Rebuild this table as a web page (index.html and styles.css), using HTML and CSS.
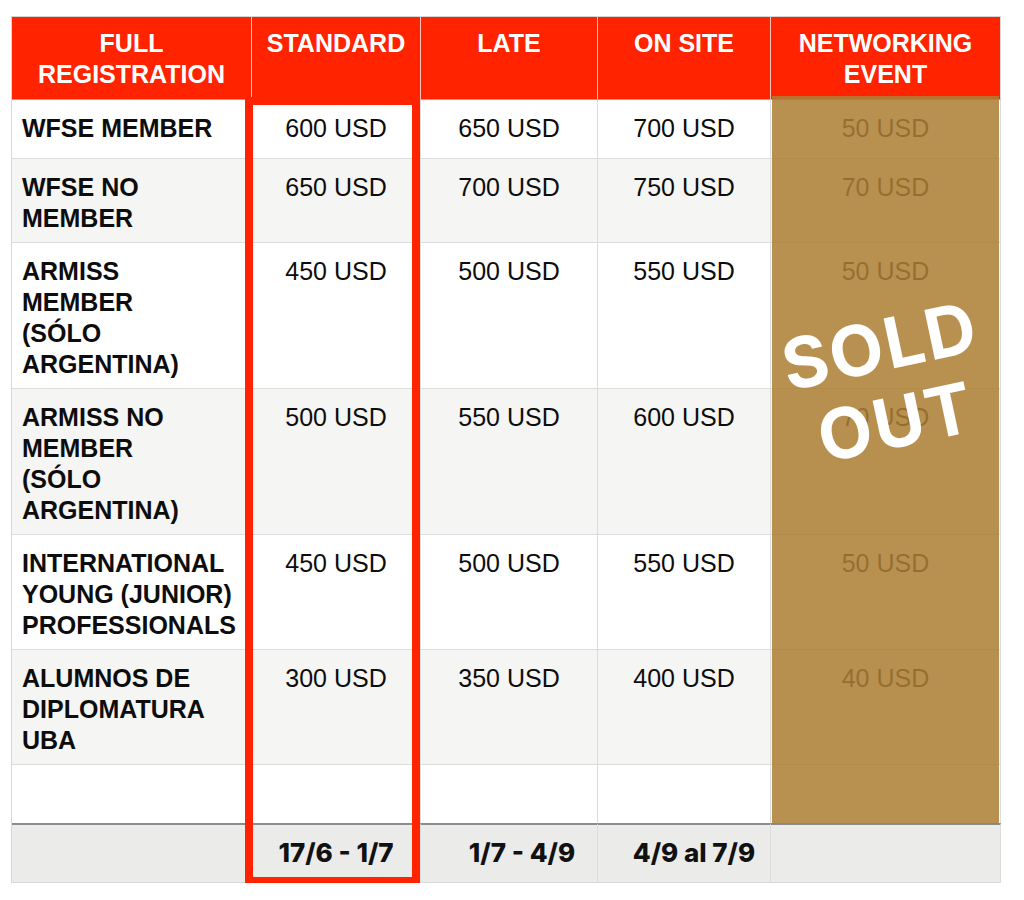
FILE: index.html
```html
<!DOCTYPE html>
<html lang="es">
<head>
<meta charset="utf-8">
<title>Registration fees</title>
<link rel="stylesheet" href="styles.css">
</head>
<body>
<div class="wrap">
  <table class="fees">
    <colgroup>
      <col class="c1"><col class="c2"><col class="c3"><col class="c4"><col class="c5">
    </colgroup>
    <thead>
      <tr>
        <th>FULL<br>REGISTRATION</th>
        <th>STANDARD</th>
        <th>LATE</th>
        <th>ON SITE</th>
        <th>NETWORKING<br>EVENT</th>
      </tr>
    </thead>
    <tbody>
      <tr class="short">
        <td class="cat">WFSE MEMBER</td><td>600 USD</td><td>650 USD</td><td>700 USD</td><td>50 USD</td>
      </tr>
      <tr class="alt">
        <td class="cat">WFSE NO<br>MEMBER</td><td>650 USD</td><td>700 USD</td><td>750 USD</td><td>70 USD</td>
      </tr>
      <tr>
        <td class="cat">ARMISS<br>MEMBER<br>(SÓLO<br>ARGENTINA)</td><td>450 USD</td><td>500 USD</td><td>550 USD</td><td>50 USD</td>
      </tr>
      <tr class="alt">
        <td class="cat">ARMISS NO<br>MEMBER<br>(SÓLO<br>ARGENTINA)</td><td>500 USD</td><td>550 USD</td><td>600 USD</td><td>70 USD</td>
      </tr>
      <tr>
        <td class="cat">INTERNATIONAL<br>YOUNG (JUNIOR)<br>PROFESSIONALS</td><td>450 USD</td><td>500 USD</td><td>550 USD</td><td>50 USD</td>
      </tr>
      <tr class="alt">
        <td class="cat">ALUMNOS DE<br>DIPLOMATURA<br>UBA</td><td>300 USD</td><td>350 USD</td><td>400 USD</td><td>40 USD</td>
      </tr>
      <tr class="empty">
        <td></td><td></td><td></td><td></td><td></td>
      </tr>
    </tbody>
    <tfoot>
      <tr>
        <td></td>
        <td class="d2">17/6 - 1/7</td>
        <td class="d3">1/7 - 4/9</td>
        <td class="d4">4/9 al 7/9</td>
        <td></td>
      </tr>
    </tfoot>
  </table>
  <div class="soldout">
    <div class="stamp">SOLD<br>OUT</div>
  </div>
  <div class="highlight"></div>
</div>
</body>
</html>
```
FILE: styles.css
```css
html, body {
  margin: 0;
  padding: 0;
  background: #ffffff;
}

.wrap {
  position: relative;
  width: 989px;
  margin: 16px 0 0 11px;
}

.fees {
  table-layout: fixed;
  width: 989px;
  border-collapse: separate;
  border-spacing: 0;
  border-top: 1px solid #d4d4d4;
  border-left: 1px solid #d8d8d8;
  font-family: "Liberation Sans", Arial, Helvetica, sans-serif;
  font-size: 25px;
  line-height: 31px;
  color: #0d0d0d;
}

.c1 { width: 240px; }
.c2 { width: 169px; }
.c3 { width: 177px; }
.c4 { width: 173px; }
.c5 { width: 230px; }

.fees th {
  background: #ff2300;
  color: #ffffff;
  font-weight: 700;
  text-align: center;
  vertical-align: top;
  padding: 11px 4px 9px;
  border-right: 1px solid rgba(255, 255, 255, 0.75);
  border-bottom: 1px solid #a9a9a9;
}

.fees th:last-child {
  border-right: 1px solid #d8d8d8;
}

.fees td {
  text-align: center;
  vertical-align: top;
  padding: 13px 4px 8px;
  border-right: 1px solid #dcdcdc;
  border-bottom: 1px solid #dcdcdc;
  background: #ffffff;
}

.fees tbody tr.alt td {
  background: #f5f5f3;
}

.fees tbody tr.short {
  height: 59px;
}

.fees td.cat {
  text-align: left;
  font-weight: 700;
  padding-left: 10px;
  padding-right: 2px;
}

.fees tbody tr.empty td {
  height: 58px;
  padding: 0;
  border-bottom: none;
  box-sizing: border-box;
}

.fees tfoot td {
  background: #ebebea;
  border-top: 2px solid #8c8c8c;
  border-bottom: 1px solid #d8d8d8;
  padding: 12px 4px 14px;
  font-family: "Inter", "Lato", sans-serif;
  font-weight: 800;
  font-size: 26px;
  line-height: 31px;
  color: #111111;
  white-space: nowrap;
}

.fees tfoot td.d2 { padding-left: 4px; }
.fees tfoot td.d3 { padding-left: 30px; }
.fees tfoot td.d4 { padding-left: 24px; }

.soldout {
  position: absolute;
  left: 761px;
  top: 80px;
  width: 227px;
  height: 728px;
  background: rgba(172, 127, 52, 0.86);
  display: flex;
  justify-content: center;
  padding-top: 210px;
  box-sizing: border-box;
}

.stamp {
  font-family: "Inter", "Lato", sans-serif;
  font-weight: 700;
  font-size: 70px;
  line-height: 78px;
  letter-spacing: 2px;
  color: #ffffff;
  text-align: center;
  transform: rotate(-12deg);
  height: 156px;
  margin-left: 4px;
}

.highlight {
  position: absolute;
  left: 234px;
  top: 81px;
  width: 175px;
  height: 788px;
  border: 8px solid #ff2300;
  box-sizing: border-box;
}
```
